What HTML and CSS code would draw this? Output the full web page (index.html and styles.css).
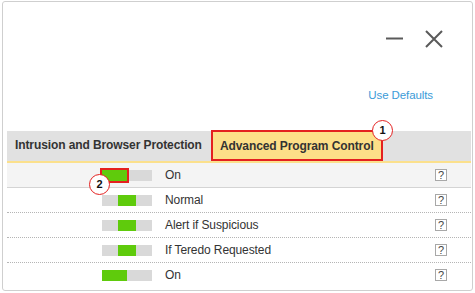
FILE: index.html
```html
<!DOCTYPE html>
<html lang="en">
<head>
    <meta charset="UTF-8">
    <meta name="viewport" content="width=device-width, initial-scale=1.0">
    <title>Advanced Program Control</title>
    <link rel="stylesheet" href="styles.css">
</head>
<body>

    <div class="window">
        <!-- Window controls -->
        <div class="titlebar">
            <svg class="ctrl" width="18" height="18" viewBox="0 0 18 18">
                <line x1="0" y1="8.5" x2="17" y2="8.5" stroke="#5a5a5a" stroke-width="2"/>
            </svg>
            <svg class="ctrl" width="18" height="18" viewBox="0 0 18 18">
                <path d="M1 1 L17 17 M17 1 L1 17" stroke="#5a5a5a" stroke-width="2"/>
            </svg>
        </div>

        <div class="defaults"><a href="#">Use Defaults</a></div>

        <div class="panel">
            <div class="tabs">
                <div class="tab">Intrusion and Browser Protection</div>
                <div class="tab active">Advanced Program Control<span class="badge">1</span></div>
            </div>

            <div class="rows">
                <div class="row selected">
                    <div class="slider">
                        <span class="fill low marked"></span>
                        <span class="badge step">2</span>
                    </div>
                    <span class="label">On</span>
                    <span class="help">?</span>
                </div>
                <div class="row">
                    <div class="slider"><span class="fill mid"></span></div>
                    <span class="label">Normal</span>
                    <span class="help">?</span>
                </div>
                <div class="row">
                    <div class="slider"><span class="fill mid"></span></div>
                    <span class="label">Alert if Suspicious</span>
                    <span class="help">?</span>
                </div>
                <div class="row">
                    <div class="slider"><span class="fill mid"></span></div>
                    <span class="label">If Teredo Requested</span>
                    <span class="help">?</span>
                </div>
                <div class="row last">
                    <div class="slider"><span class="fill low"></span></div>
                    <span class="label">On</span>
                    <span class="help">?</span>
                </div>
            </div>
        </div>
    </div>

</body>
</html>
```

FILE: styles.css
```css
body {
    margin: 0;
    font-family: "Liberation Sans", Arial, sans-serif;
    font-size: 12px;
    letter-spacing: -0.1px;
    color: #333;
    background: #fff;
}
.window {
    box-sizing: border-box;
    width: 471px;
    height: 290px;
    margin: 1px 0 0 2px;
    border: 1px solid #cfcfcf;
    border-radius: 3px;
}
.titlebar {
    display: flex;
    justify-content: flex-end;
    gap: 21px;
    padding: 28px 29px 0 0;
}
.ctrl {
    display: block;
}
.defaults {
    text-align: right;
    padding: 39px 39px 0 0;
    line-height: 16px;
    font-size: 11.5px;
}
.defaults a {
    color: #3b9bd8;
    text-decoration: none;
}
.panel {
    margin: 28px 1px 0 4px;
}
.tabs {
    display: flex;
    align-items: flex-end;
    height: 30px;
    background: #e1e1e1;
    border-bottom: 2px solid #fbe08c;
}
.tab {
    box-sizing: border-box;
    height: 30px;
    line-height: 29px;
    font-weight: bold;
    white-space: nowrap;
}
.tab:first-child {
    width: 204px;
    padding-left: 8px;
}
.tab.active {
    position: relative;
    width: 172px;
    height: 31px;
    padding-left: 7px;
    background: #fddf88;
    border: 2px solid #e4201f;
}
.badge {
    position: absolute;
    box-sizing: border-box;
    width: 21px;
    height: 21px;
    border: 1px solid #e4201f;
    border-radius: 50%;
    background: #fff;
    color: #111;
    font-weight: bold;
    font-size: 11px;
    line-height: 19px;
    letter-spacing: 0;
    text-align: center;
}
.tab.active .badge {
    right: -12px;
    top: -12px;
}
.row {
    display: flex;
    align-items: center;
    height: 24px;
    border-bottom: 1px dotted #b5b5b5;
}
.row.selected {
    background: #f4f4f4;
    border-bottom: 1px solid #d4d4d4;
}
.row.last {
    border-bottom: none;
}
.slider {
    position: relative;
    width: 50px;
    height: 11px;
    margin-left: 95px;
    background: #d9d9d9;
}
.fill {
    position: absolute;
    top: 0;
    height: 11px;
    background: #5fcb0c;
}
.fill.low {
    left: 0;
    width: 25px;
}
.fill.mid {
    left: 16px;
    width: 18px;
}
.fill.marked {
    outline: 2px solid #e4201f;
}
.badge.step {
    left: -13px;
    top: 4px;
}
.label {
    margin-left: 13px;
    flex: 1;
}
.help {
    box-sizing: border-box;
    width: 12px;
    height: 12px;
    margin-right: 24px;
    border: 1px solid #a8a8a8;
    background: #fff;
    color: #444;
    font-size: 11px;
    line-height: 11px;
    letter-spacing: 0;
    text-align: center;
}
```
